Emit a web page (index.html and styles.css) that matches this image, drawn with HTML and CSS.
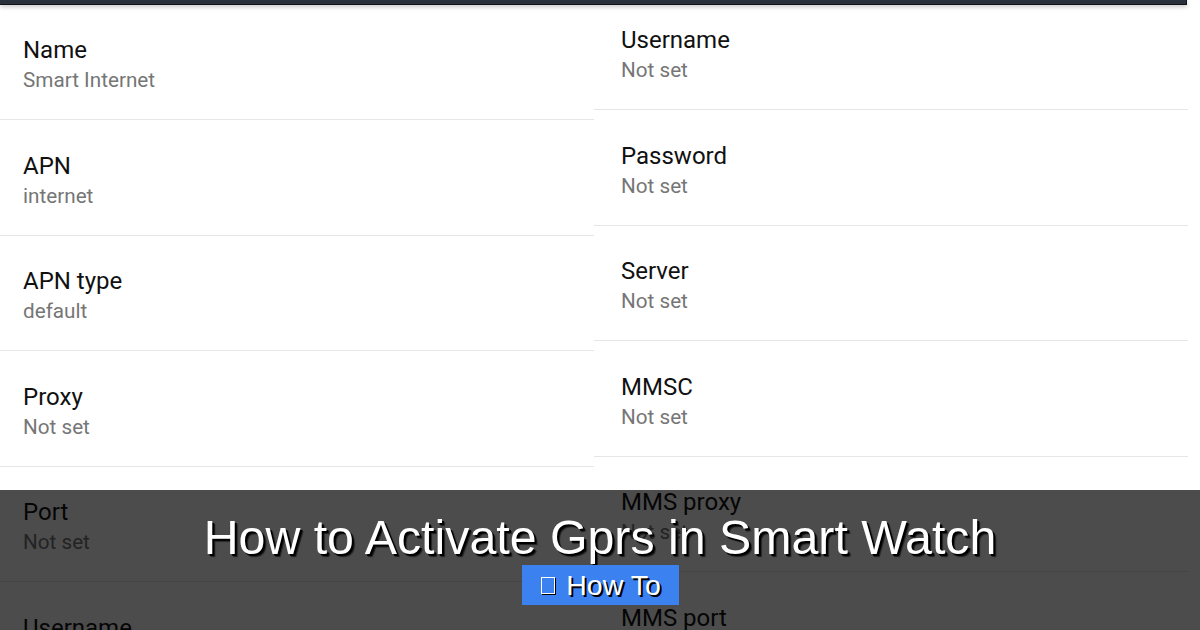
FILE: index.html
```html
<!DOCTYPE html>
<html lang="en">
<head>
<meta charset="utf-8">
<title>How to Activate Gprs in Smart Watch</title>
<link rel="stylesheet" href="styles.css">
</head>
<body>
<div class="page">
  <div class="screens">
    <div class="col col-left">
      <div class="row"><div class="title">Name</div><div class="sub">Smart Internet</div></div>
      <div class="row"><div class="title">APN</div><div class="sub">internet</div></div>
      <div class="row"><div class="title">APN type</div><div class="sub">default</div></div>
      <div class="row"><div class="title">Proxy</div><div class="sub">Not set</div></div>
      <div class="row"><div class="title">Port</div><div class="sub">Not set</div></div>
      <div class="row"><div class="title">Username</div><div class="sub">Not set</div></div>
    </div>
    <div class="col col-right">
      <div class="row"><div class="title">Username</div><div class="sub">Not set</div></div>
      <div class="row"><div class="title">Password</div><div class="sub">Not set</div></div>
      <div class="row"><div class="title">Server</div><div class="sub">Not set</div></div>
      <div class="row"><div class="title">MMSC</div><div class="sub">Not set</div></div>
      <div class="row"><div class="title">MMS proxy</div><div class="sub">Not set</div></div>
      <div class="row"><div class="title">MMS port</div><div class="sub">Not set</div></div>
    </div>
  </div>
  <div class="topbar"></div>
  <div class="banner">
    <h1 class="headline">How to Activate Gprs in Smart Watch</h1>
    <div class="badge"><span class="tofu"></span><span class="badge-text">How To</span></div>
  </div>
</div>
</body>
</html>
```

FILE: styles.css
```css
html, body {
  margin: 0;
  padding: 0;
  background: #ffffff;
}
.page {
  position: relative;
  width: 1200px;
  height: 630px;
  overflow: hidden;
  background: #ffffff;
}
.screens {
  display: flex;
  align-items: flex-start;
}
.col {
  width: 594px;
  display: flex;
  flex-direction: column;
}
.col-left {
  padding-top: 4.5px;
}
.col-right {
  margin-top: -5.5px;
}
.row {
  box-sizing: border-box;
  height: 115.5px;
  padding-top: 30.5px;
  border-bottom: 1px solid #e6e6e6;
  font-family: Roboto, "Noto Sans", sans-serif;
}
.col-left .row {
  padding-left: 23px;
}
.col-right .row {
  padding-left: 27px;
}
.title {
  font-size: 24px;
  line-height: 30px;
  color: #111111;
}
.sub {
  font-size: 20.7px;
  line-height: 30px;
  color: #767676;
}
.topbar {
  position: absolute;
  left: 0;
  top: 0;
  width: 1186px;
  height: 4px;
  background: #28313b;
  border-bottom: 1px solid #111417;
  border-right: 1px solid #111417;
  box-shadow: 0 2px 4px rgba(0, 0, 0, 0.22);
}
.banner {
  position: absolute;
  left: 0;
  bottom: 0;
  width: 1200px;
  height: 140px;
  background: rgba(0, 0, 0, 0.7);
  display: flex;
  flex-direction: column;
  align-items: center;
  padding-top: 19px;
  box-sizing: border-box;
}
.headline {
  margin: 0;
  font-family: "Liberation Sans", Arial, sans-serif;
  font-weight: normal;
  font-size: 48.3px;
  line-height: 56px;
  color: #ffffff;
  text-shadow: 2px 2px 0 #000, 3px 3px 1px rgba(0, 0, 0, 0.6);
  white-space: nowrap;
}
.badge {
  margin-top: 0;
  height: 40px;
  width: 157px;
  box-sizing: border-box;
  background: #3b82f0;
  display: flex;
  align-items: center;
  justify-content: center;
  gap: 11px;
  padding-left: 2px;
}
.tofu {
  width: 12px;
  height: 15px;
  border: 1.5px solid #ffffff;
  box-shadow: 1px 1px 0 #000;
  margin-top: 1px;
}
.badge-text {
  font-family: "Liberation Sans", Arial, sans-serif;
  font-size: 28.5px;
  line-height: 32px;
  color: #ffffff;
  text-shadow: 2px 2px 0 #000;
}
```
